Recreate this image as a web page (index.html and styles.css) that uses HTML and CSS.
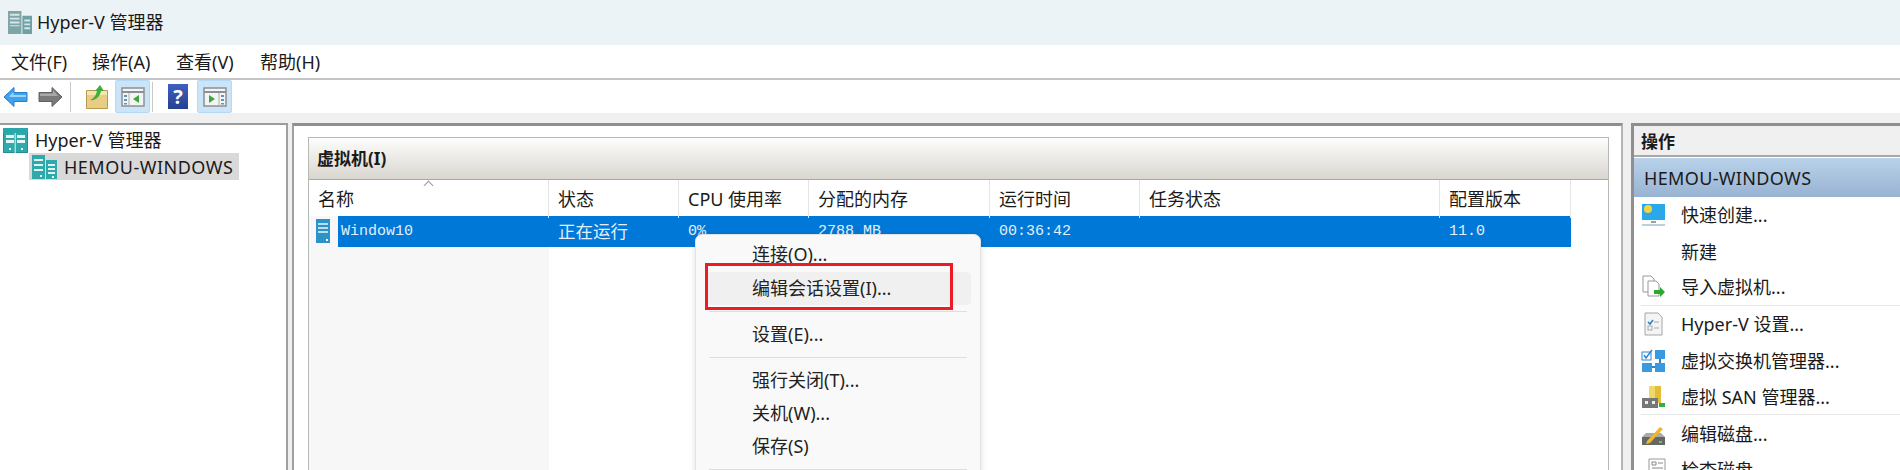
FILE: index.html
```html
<!DOCTYPE html>
<html lang="zh-CN">
  <head>
    <meta charset="utf-8">
    <title>Hyper-V 管理器</title>
    <link rel="stylesheet" href="styles.css">
  </head>
  <body>
    <svg class="defs" width="0" height="0">
      <symbol id="server" viewBox="0 0 25 25">
        <rect x="0.5" y="0.5" width="24" height="24" fill="#2fa9a9" stroke="#1f8f94"/>
        <rect x="0" y="0" width="25" height="5" fill="#2aa7ab"/>
        <path d="M3 7h8v3H3zM14 7h8v3h-8zM3 12h8v3H3zM14 12h8v3h-8z" fill="#e6f6f6"/>
        <path d="M12.200 5v20" stroke="#e6f6f6"/>
        <rect x="6" y="20" width="2" height="2" fill="#fff"/>
        <rect x="18" y="20" width="2" height="2" fill="#fff"/>
      </symbol>
      <symbol id="host" viewBox="0 0 25 25">
        <rect x="0" y="1" width="13" height="24" fill="#2fa9a9"/>
        <rect x="14" y="6" width="11" height="19" fill="#2fa9a9"/>
        <path d="M2 5h9v2H2zM2 10h9v2H2zM2 15h9v2H2zM16 10h7v2h-7zM16 14h7v2h-7zM16 18h7v2h-7z" fill="#dff3f3"/>
        <rect x="8" y="21" width="2" height="2" fill="#fff"/>
        <rect x="20" y="22" width="2" height="2" fill="#fff"/>
      </symbol>
      <symbol id="pane-left" viewBox="0 0 24 20">
        <rect x="1" y="1" width="22" height="18" fill="#f3f5f4" stroke="#8b9094" stroke-width="1.500"/>
        <path d="M1 5h22" stroke="#8b9094" stroke-width="2"/>
        <path d="M8 6v13" stroke="#a9aeb1"/>
        <path d="M3 8h3v2H3zM3 12h3v2H3zM3 16h3v1.500H3z" fill="#6d8fb8"/>
        <path d="M18 8v8l-6-4z" fill="#3aa83a"/>
      </symbol>
      <symbol id="pane-right" viewBox="0 0 24 20">
        <rect x="1" y="1" width="22" height="18" fill="#f3f5f4" stroke="#8b9094" stroke-width="1.500"/>
        <path d="M1 5h22" stroke="#8b9094" stroke-width="2"/>
        <path d="M16 6v13" stroke="#a9aeb1"/>
        <path d="M18 8h3v2h-3zM18 12h3v2h-3zM18 16h3v1.500h-3z" fill="#6d8fb8"/>
        <path d="M6 8v8l6-4z" fill="#3aa83a"/>
      </symbol>
    </svg>

    <header class="titlebar">
      <svg class="title-icon" viewBox="0 0 25 25">
        <rect x="0" y="1" width="14" height="24" fill="#7fa5a8"/>
        <rect x="15" y="6" width="10" height="19" fill="#6fa0a3"/>
        <path d="M2 4h10v2H2zM2 8h10v2H2zM2 12h10v2H2zM2 16h10v1H2zM17 10h6v2h-6zM17 14h6v2h-6zM17 18h6v2h-6z" fill="#d5e6e6"/>
      </svg>
      <span>Hyper-V 管理器</span>
    </header>

    <nav class="menubar">
      <span class="menu-file">文件(F)</span>
      <span class="menu-action">操作(A)</span>
      <span class="menu-view">查看(V)</span>
      <span>帮助(H)</span>
    </nav>

    <div class="toolbar">
      <svg class="arrow" viewBox="0 0 25 22"><path d="M1 11 11 1.500v5h13v9H11v5z" fill="#3ea2ee" stroke="#2a7fc9" stroke-linejoin="round"/><path d="M6 10.500 10.500 6v3H23v2H8z" fill="#9dd4fa"/></svg>
      <svg class="arrow arrow-next" viewBox="0 0 25 22"><path d="M24 11 14 1.500v5H1v9h13v5z" fill="#7a7a7a" stroke="#5f5f5f" stroke-linejoin="round"/><path d="M2 7.500h13V4l5 6H2z" fill="#a8a8a8"/></svg>
      <i class="tool-sep"></i>
      <svg class="folder" viewBox="0 0 22 25"><path d="M0.500 6.500h21v18H0.500z" fill="#e8cd84" stroke="#b79a4e"/><path d="M1 7h20v4H1z" fill="#f6e4ae"/><path d="M4 16c3-1 6-4 7-9l-2 0 5-6 4 6h-3c-1 5-5 10-11 9z" fill="#3fae3a"/></svg>
      <span class="tool-btn"><svg><use href="#pane-left"/></svg></span>
      <i class="tool-sep tool-sep-tight"></i>
      <span class="help-icon">?</span>
      <span class="tool-btn"><svg><use href="#pane-right"/></svg></span>
    </div>

    <main class="panes">
      <aside class="tree">
        <div class="tree-root">
          <svg class="tree-icon"><use href="#server"/></svg>
          <span>Hyper-V 管理器</span>
        </div>
        <div class="tree-node">
          <svg class="tree-icon"><use href="#host"/></svg>
          <span class="host-name">HEMOU-WINDOWS</span>
        </div>
      </aside>

      <section class="center">
        <div class="vm-section">
          <h2 class="vm-heading">虚拟机(I)</h2>
          <div class="vm-columns">
            <div class="col col-sorted">名称<i class="sort-mark"></i></div>
            <div class="col">状态</div>
            <div class="col">CPU 使用率</div>
            <div class="col">分配的内存</div>
            <div class="col">运行时间</div>
            <div class="col">任务状态</div>
            <div class="col">配置版本</div>
          </div>
          <div class="vm-row">
            <div class="cell cell-name">
              <svg class="vm-icon" viewBox="0 0 14 24">
                <rect width="14" height="24" fill="#2b93c8"/>
                <path d="M2 4h10v2H2zM2 8h10v2H2zM2 12h10v2H2z" fill="#b9def0"/>
                <rect x="10" y="20" width="2" height="2" fill="#fff"/>
              </svg>
              <span class="cell-selected mono">Window10</span>
            </div>
            <div class="cell cell-selected cell-status">正在运行</div>
            <div class="cell cell-selected mono">0%</div>
            <div class="cell cell-selected mono">2788 MB</div>
            <div class="cell cell-selected mono">00:36:42</div>
            <div class="cell cell-selected"></div>
            <div class="cell cell-selected mono">11.0</div>
          </div>
          <div class="vm-rest"><div class="sorted-fill"></div></div>
        </div>

        <ul class="context-menu">
          <li>连接(O)...</li>
          <li class="hover">编辑会话设置(I)...</li>
          <li class="menu-sep"></li>
          <li>设置(E)...</li>
          <li class="menu-sep"></li>
          <li>强行关闭(T)...</li>
          <li>关机(W)...</li>
          <li>保存(S)</li>
          <li class="menu-sep"></li>
        </ul>
        <div class="callout"></div>
      </section>

      <aside class="actions">
        <h2 class="actions-title">操作</h2>
        <div class="actions-host">HEMOU-WINDOWS</div>
        <ul class="action-list">
          <li>
            <svg viewBox="0 0 25 24"><rect x="1" y="1" width="23" height="16" fill="#29a9ea"/><circle cx="7" cy="6" r="4" fill="#f6d23c"/><path d="M10 18h5v2h-5z" fill="#8aa"/><path d="M1 21h23v2H1z" fill="#bcd0dc"/></svg>
            <span>快速创建...</span>
          </li>
          <li><span class="no-icon">新建</span></li>
          <li class="group-end">
            <svg viewBox="0 0 25 24"><path d="M2 1h8l3 3v13H2z" fill="#fff" stroke="#999"/><path d="M7 6h8l3 3v12H7z" fill="#fff" stroke="#999"/><path d="M13 15h6v-3l5 5-5 5v-3h-6z" fill="#2aa92f"/></svg>
            <span>导入虚拟机...</span>
          </li>
          <li>
            <svg viewBox="0 0 25 24"><path d="M4 1h13l4 4v18H4z" fill="#f4f4f4" stroke="#a5a5a5"/><path d="M7 10l2 2 3-4" fill="none" stroke="#2a7ec9" stroke-width="1.500"/><path d="M13 10h5M13 16h5" stroke="#aaa"/><rect x="7" y="14" width="4" height="4" fill="none" stroke="#aaa"/></svg>
            <span>Hyper-V 设置...</span>
          </li>
          <li>
            <svg viewBox="0 0 25 24"><rect x="1" y="3" width="9" height="8" fill="#fff" stroke="#2a86cf"/><path d="M3 6l2 3 6-8" fill="none" stroke="#2a86cf" stroke-width="1.500"/><rect x="14" y="1" width="10" height="9" fill="#3a9ae0"/><rect x="1" y="14" width="10" height="9" fill="#3a9ae0"/><rect x="14" y="14" width="10" height="9" fill="#3a9ae0"/><path d="M19 10v4M11 18h3" stroke="#2a86cf" stroke-width="2"/></svg>
            <span>虚拟交换机管理器...</span>
          </li>
          <li class="group-end">
            <svg viewBox="0 0 25 24"><path d="M8 1h12v17H8z" fill="#f0d866"/><path d="M14 1h6v17h-6z" fill="#e2bd3c"/><rect x="1" y="13" width="16" height="10" fill="#777"/><rect x="4" y="16" width="3" height="3" fill="#eee"/><rect x="11" y="16" width="3" height="3" fill="#eee"/><rect x="18" y="18" width="6" height="4" fill="#35b044"/></svg>
            <span>虚拟 SAN 管理器...</span>
          </li>
          <li>
            <svg viewBox="0 0 25 24"><path d="M1 15h23v8H1z" fill="#666"/><path d="M1 15l4-4h15l4 4z" fill="#aaa"/><path d="M6 19 19 5l3 2-13 14-4 1z" fill="#f2b824"/><rect x="18" y="19" width="3" height="2" fill="#5ad05a"/></svg>
            <span>编辑磁盘...</span>
          </li>
          <li>
            <svg viewBox="0 0 25 24"><path d="M8 1h16v14H8z" fill="#fff" stroke="#999"/><path d="M11 4h4v3h-4zM17 5h5M11 10h11" stroke="#888" fill="none"/><path d="M1 15h14v8H1z" fill="#888"/></svg>
            <span>检查磁盘...</span>
          </li>
        </ul>
      </aside>
    </main>
  </body>
</html>
```

FILE: styles.css
```css
* {
  box-sizing: border-box;
}

html,
body {
  height: 470px;
  margin: 0;
  overflow: hidden;
}

body {
  display: flex;
  flex-direction: column;
  background: #f0f0f0;
  color: #1a1a1a;
  font-family: "Noto Sans", "Noto Sans CJK SC", sans-serif;
  font-size: 18px;
  line-height: 24px;
}

h2,
ul {
  margin: 0;
  padding: 0;
  list-style: none;
}

.defs {
  display: block;
  height: 0;
}

.titlebar {
  display: flex;
  align-items: center;
  gap: 5px;
  height: 45px;
  padding: 0 0 2px 8px;
  background: #ecf3f7;
}

.title-icon {
  width: 24px;
  height: 24px;
}

.menubar {
  display: flex;
  align-items: center;
  height: 35px;
  padding-left: 11px;
  background: #fff;
  border-bottom: 2px solid #c4c4c4;
}

.menu-file {
  width: 81px;
}

.menu-action,
.menu-view {
  width: 84px;
}

.toolbar {
  display: flex;
  align-items: center;
  height: 33px;
  padding-left: 3px;
  background: #fff;
}

.arrow {
  width: 25px;
  height: 22px;
}

.arrow-next {
  margin-left: 10px;
}

.tool-sep {
  width: 1px;
  height: 30px;
  margin: 0 15px 0 7px;
  background: #c8c8c8;
}

.tool-sep-tight {
  margin-left: 2px;
}

.folder {
  width: 22px;
  height: 25px;
  margin-right: 7px;
}

.tool-btn {
  display: flex;
  align-items: center;
  justify-content: center;
  width: 35px;
  height: 33px;
  background: #cce4f7;
  border: 1px solid #b5daf7;
  border-radius: 2px;
}

.tool-btn svg {
  width: 24px;
  height: 20px;
}

.help-icon {
  width: 20px;
  height: 25px;
  margin-right: 9px;
  background: linear-gradient(#4060c0, #24408f);
  color: #fff;
  font-size: 20px;
  font-weight: 700;
  line-height: 25px;
  text-align: center;
}

.panes {
  display: flex;
  flex: 1;
  min-height: 0;
  padding-top: 10px;
}

.tree {
  width: 288px;
  padding-top: 2px;
  background: #fff;
  border-top: 2px solid #9c9c9c;
  border-right: 2px solid #a0a0a0;
}

.tree-root,
.tree-node {
  display: flex;
  align-items: center;
}

.tree-root {
  height: 26px;
  padding-left: 3px;
  gap: 7px;
}

.tree-node {
  width: 210px;
  height: 27px;
  margin-left: 29px;
  padding-left: 3px;
  gap: 7px;
  background: #d9d9d9;
}

.host-name {
  letter-spacing: 0.500px;
}

.tree-icon {
  width: 25px;
  height: 25px;
}

.center {
  position: relative;
  width: 1331px;
  margin-left: 4px;
  padding: 11px 12px 0 14px;
  background: #fff;
  border-top: 3px solid #8f8f8f;
  border-left: 2px solid #a0a0a0;
  border-right: 2px solid #b4b4b4;
}

.vm-section {
  display: flex;
  flex-direction: column;
  height: 100%;
  border: 1px solid #b8b8b8;
  border-bottom: 0;
}

.vm-heading {
  height: 42px;
  padding-left: 8px;
  background: linear-gradient(#fdfdfc, #d9d6cf);
  border-bottom: 1px solid #a8a8a8;
  font-size: 17px;
  font-weight: 700;
  line-height: 42px;
}

.vm-columns,
.vm-row {
  display: grid;
  grid-template-columns: 240px 130px 130px 181px 150px 300px 131px;
}

.vm-columns {
  height: 36px;
}

.col {
  position: relative;
  padding-left: 9px;
  border-right: 1px solid #e5e5e5;
  line-height: 38px;
}

.sort-mark {
  position: absolute;
  top: 2px;
  left: 116px;
  width: 7px;
  height: 7px;
  border-top: 1px solid #999;
  border-left: 1px solid #999;
  transform: rotate(45deg);
}

.vm-row {
  grid-template-rows: 31px;
  height: 31px;
}

.cell {
  color: #e3effa;
  line-height: 31px;
}

.cell-selected {
  display: block;
  padding-left: 9px;
  background: #0078d7;
  white-space: nowrap;
}

.cell-name {
  display: flex;
  padding-left: 7px;
  background: #f7f7f7;
}

.cell-name .cell-selected {
  flex: 1;
  padding-left: 3px;
}

.vm-icon {
  width: 14px;
  height: 24px;
  margin: 3px 8px 0 0;
}

.mono {
  font-family: "Liberation Mono", "Noto Sans CJK SC", monospace;
  font-size: 15px;
  line-height: 32px;
  overflow: hidden;
}

.cell-status {
  font-size: 17.500px;
  line-height: 30px;
  overflow: hidden;
}

.vm-rest {
  flex: 1;
}

.sorted-fill {
  width: 240px;
  height: 100%;
  background: #f7f7f7;
}

.context-menu {
  position: absolute;
  top: 108px;
  left: 401px;
  width: 286px;
  height: 260px;
  padding: 3px 9px 0 11px;
  background: #f9f9f9;
  border: 1px solid #e2e2e2;
  border-radius: 7px;
  box-shadow: 0 2px 6px rgba(0, 0, 0, 0.12);
}

.context-menu li {
  height: 33px;
  padding-left: 45px;
  line-height: 33px;
  color: #222;
}

.context-menu .hover {
  margin-top: 1px;
  background: #f0f0f0;
  border-radius: 4px;
}

.context-menu .menu-sep {
  height: 1px;
  margin: 6px 4px;
  margin-left: 2px;
  padding: 0;
  background: #dedede;
}

.callout {
  position: absolute;
  top: 137px;
  left: 411px;
  width: 248px;
  height: 47px;
  border: 3.500px solid #ed1c24;
}

.actions {
  flex: 1;
  margin-left: 8px;
  background: #fff;
  border-top: 3px solid #8f8f8f;
  border-left: 3px solid #8f8f8f;
}

.actions-title {
  height: 31px;
  padding-left: 7px;
  background: #f0f0f0;
  border-bottom: 2px solid #a8a8a8;
  font-size: 17px;
  font-weight: 700;
  line-height: 32px;
}

.actions-host {
  height: 39px;
  margin-top: 1px;
  padding-left: 10px;
  background: linear-gradient(#b9d2ea, #98b3d2);
  letter-spacing: 0.350px;
  line-height: 40px;
}

.action-list li {
  display: flex;
  align-items: center;
  gap: 15px;
  height: 36.400px;
  margin-left: 7px;
}

.action-list .group-end {
  border-bottom: 1px solid #e6e6e6;
}

.action-list svg {
  width: 25px;
  height: 24px;
}

.no-icon {
  margin-left: 40px;
}
```
